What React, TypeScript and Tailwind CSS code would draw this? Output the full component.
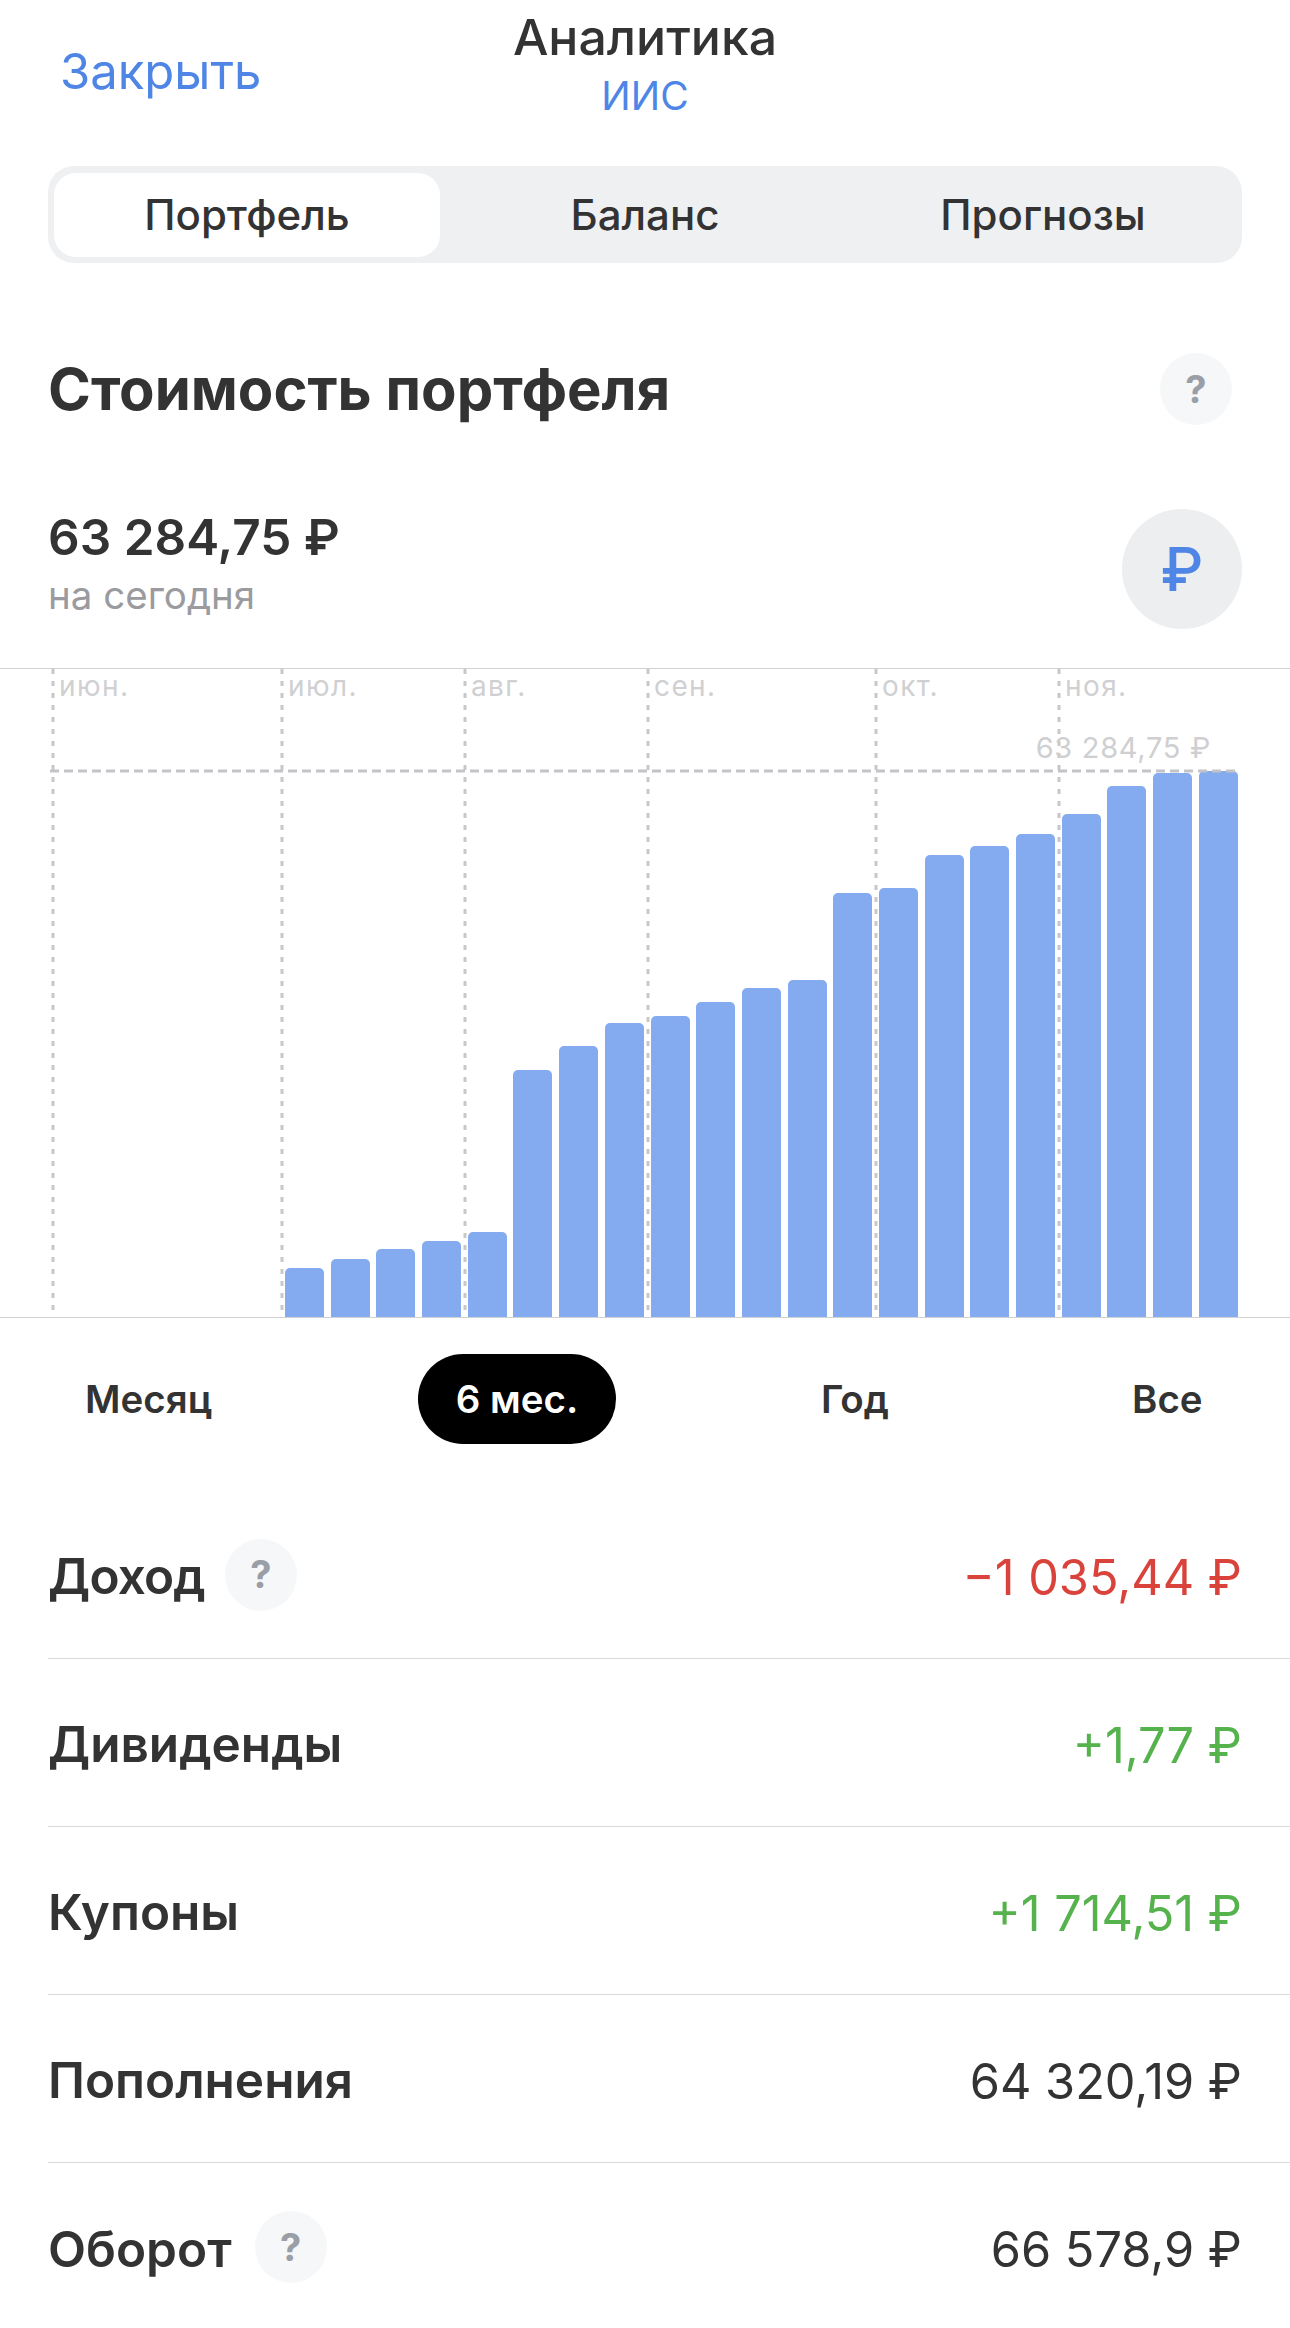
const tabs = ["Портфель", "Баланс", "Прогнозы"];

const months = [
  { x: 53, label: "июн." },
  { x: 282, label: "июл." },
  { x: 465, label: "авг." },
  { x: 648, label: "сен." },
  { x: 876, label: "окт." },
  { x: 1059, label: "ноя." },
];

// bar heights in px, left to right
const bars = [49, 58, 68, 76, 85, 247, 271, 294, 301, 315, 329, 337, 424, 429, 462, 471, 483, 503, 531, 544, 546];

const rows = [
  { label: "Доход", value: "−1 035,44 ₽", color: "text-[#d9433b]", help: true, tight: true },
  { label: "Дивиденды", value: "+1,77 ₽", color: "text-[#55b24d]", help: false, tight: false },
  { label: "Купоны", value: "+1 714,51 ₽", color: "text-[#55b24d]", help: false, tight: false },
  { label: "Пополнения", value: "64 320,19 ₽", color: "text-[#333333]", help: false, tight: false },
  { label: "Оборот", value: "66 578,9 ₽", color: "text-[#333333]", help: true, tight: false },
];

function Help() {
  return (
    <div className="flex h-[72px] w-[72px] items-center justify-center rounded-full bg-[#f6f7f8] text-[38px] font-bold text-[#9a9ea6]">
      ?
    </div>
  );
}

function Chart() {
  return (
    <div className="relative h-[650px] w-full border-y-[1.5px] border-[#d0d2d6]">
      <svg className="absolute inset-0 h-full w-full" width="1290" height="650">
        {months.map((m) => (
          <line key={m.x} x1={m.x} x2={m.x} y1="0" y2="646" stroke="#c8c8ca" strokeWidth="3" strokeDasharray="5 7" />
        ))}
      </svg>
      {months.map((m) => (
        <span
          key={m.label}
          className="absolute top-[-1px] text-[28px] leading-[36px] tracking-[1.4px] text-[#d0d0d2]"
          style={{ left: m.x + 6 }}
        >
          {m.label}
        </span>
      ))}
      <div className="absolute inset-0 flex items-end gap-[6.7px] pl-[285px]">
        {bars.map((h, i) => (
          <div key={i} className="w-[39px] rounded-t-[5px] bg-[#84aaf0]" style={{ height: h }} />
        ))}
      </div>
      <svg className="absolute inset-0 h-full w-full" width="1290" height="650">
        <line x1="50" x2="1238" y1="102" y2="102" stroke="#c4c4c8" strokeWidth="3" strokeDasharray="9 5" />
      </svg>
      <span className="absolute right-[79px] top-[62px] text-[29px] leading-[34px] tracking-[0.7px] text-[#cfcfd1]">
        63 284,75 ₽
      </span>
    </div>
  );
}

export default function App() {
  return (
    <div className="h-[2328px] w-[1290px] overflow-hidden bg-white font-['Inter','Noto_Sans',sans-serif] text-[#333333]">
      <header className="relative h-[166px]">
        <button className="absolute left-[60px] top-[42px] text-[49px] leading-[60px] text-[#4f86e6]">Закрыть</button>
        <div className="flex flex-col items-center pt-[9px]">
          <div className="text-[50px] font-medium leading-[56px]">Аналитика</div>
          <div className="mt-[8px] text-[39px] leading-[46px] text-[#4f86e6]">ИИС</div>
        </div>
      </header>

      <div className="mx-[48px] flex h-[97px] items-center rounded-[26px] bg-[#eff0f2] p-[6px]">
        {tabs.map((t, i) => (
          <div
            key={t}
            className={
              i === 0
                ? "flex h-[84px] w-[386px] items-center justify-center rounded-[22px] bg-white text-[42px] font-medium"
                : "flex h-[84px] flex-1 items-center justify-center pl-[12px] text-[42px] font-medium"
            }
          >
            {t}
          </div>
        ))}
      </div>

      <div className="mt-[90px] flex h-[72px] items-center justify-between pl-[48px] pr-[58px]">
        <h1 className="text-[58px] font-bold leading-[72px]">Стоимость портфеля</h1>
        <Help />
      </div>

      <div className="mt-[84px] flex h-[120px] items-center justify-between px-[48px]">
        <div className="-mt-[4px]">
          <div className="text-[49.5px] font-semibold leading-[52px]">63 284,75 ₽</div>
          <div className="mt-[3px] text-[38.5px] leading-[58px] text-[#9b9b9f]">на сегодня</div>
        </div>
        <div className="flex h-[120px] w-[120px] items-center justify-center rounded-full bg-[#eceef0] text-[60px] font-medium text-[#4f86e6]">
          ₽
        </div>
      </div>

      <div className="mt-[39px]">
        <Chart />
      </div>

      <div className="relative mt-[36px] h-[90px] text-[38.5px] font-semibold leading-[90px]">
        <span className="absolute left-[85px]">Месяц</span>
        <span className="absolute left-[418px] h-[90px] w-[198px] rounded-full bg-black text-center text-white">6 мес.</span>
        <span className="absolute left-[821px]">Год</span>
        <span className="absolute left-[1132px]">Все</span>
      </div>

      <div className="mt-[47px] pl-[48px]">
        {rows.map((r, i) => (
          <div
            key={r.label}
            className={
              i < rows.length - 1
                ? "flex h-[168px] items-center justify-between border-b-[1.5px] border-[#d8d9dc] pr-[48px]"
                : "flex h-[168px] items-center justify-between pr-[48px]"
            }
          >
            <div className={r.tight ? "flex items-center gap-[20px]" : "flex items-center gap-[23px]"}>
              <span className={r.tight ? "pt-[4px] text-[49.5px] font-semibold tracking-[-0.8px]" : "pt-[4px] text-[49.5px] font-semibold"}>
                {r.label}
              </span>
              {r.help && <Help />}
            </div>
            <span className={"pt-[6px] text-[48.7px] " + r.color}>{r.value}</span>
          </div>
        ))}
      </div>
    </div>
  );
}
